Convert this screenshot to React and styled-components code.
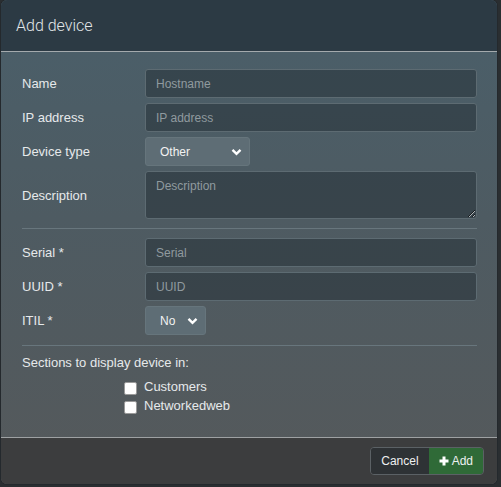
import React from "react";
import styled, { createGlobalStyle } from "styled-components";

const Global = createGlobalStyle`
  html, body { margin: 0; padding: 0; background: #2a2e31; }
  body { font-family: "Liberation Sans", Arial, sans-serif; width: 501px; height: 487px; overflow: hidden; }
  * { box-sizing: border-box; }
`;

const Modal = styled.div`
  margin-left: 1px;
  width: 496px;
  height: 484px;
  border-radius: 6px;
  overflow: hidden;
  display: flex;
  flex-direction: column;
  background: linear-gradient(180deg, #4a5f6a 0%, #4e5b62 45%, #55595b 100%);
  box-shadow: 0 0 0 1px #24292d;
`;

const Header = styled.div`
  height: 52px;
  flex: none;
  background: #2c3a44;
  border-bottom: 1px solid #a4aaad;
  display: flex;
  align-items: center;
  padding: 0 15px;
`;

const Title = styled.h4`
  margin: 0;
  font-family: Roboto, "Liberation Sans", sans-serif;
  font-size: 16px;
  font-weight: 300;
  color: #e2e6e8;
`;

const Body = styled.div`
  flex: 1;
  padding: 17px 20px 0 21px;
  display: flex;
  flex-direction: column;
`;

const Grid = styled.div`
  display: grid;
  grid-template-columns: 123px 1fr;
  row-gap: 5px;
  align-items: center;
`;

const Label = styled.label`
  font-size: 13px;
  color: #e6e9eb;
`;

const Input = styled.input`
  height: 29px;
  width: 100%;
  background: rgba(38, 50, 57, 0.55);
  border: 1px solid #5d6b72;
  border-radius: 3px;
  padding: 0 10px;
  font-family: inherit;
  font-size: 12px;
  color: #eee;
  outline: none;
  &::placeholder { color: #909a9f; }
`;

const TextArea = styled.textarea`
  height: 48px;
  width: 100%;
  background: rgba(38, 50, 57, 0.55);
  border: 1px solid #5d6b72;
  border-radius: 3px;
  padding: 7px 10px;
  font-family: inherit;
  font-size: 12px;
  color: #eee;
  outline: none;
  resize: vertical;
  display: block;
  &::placeholder { color: #909a9f; }
`;

const SelectBox = styled.div`
  height: 29px;
  width: ${p => p.$w}px;
  background: #5e6d75;
  border: 1px solid #66757c;
  border-radius: 3px;
  display: flex;
  align-items: center;
  justify-content: space-between;
  padding: 0 7px 0 ${p => p.$pl}px;
  font-size: 12px;
  color: #f2f2f2;
`;

const Rule = styled.hr`
  border: 0;
  border-top: 1px solid #68767d;
  margin: ${p => p.$m};
`;

const SectionTitle = styled.div`
  font-size: 13px;
  color: #e6e9eb;
  margin-bottom: 9px;
`;

const CheckList = styled.div`
  display: flex;
  flex-direction: column;
  gap: 4px;
  padding-left: 102px;
`;

const CheckRow = styled.label`
  display: flex;
  align-items: center;
  gap: 7px;
  font-size: 13px;
  color: #e6e9eb;
  height: 15px;
`;

const Box = styled.span`
  width: 13px;
  height: 13px;
  background: #fff;
  border: 1px solid #9a9a9a;
  border-radius: 2px;
  margin-top: 3px;
`;

const Footer = styled.div`
  height: 47px;
  flex: none;
  background: #3c3d3e;
  border-top: 1px solid #9ea1a3;
  display: flex;
  justify-content: flex-end;
  align-items: center;
  padding: 0 13px 0 0;
`;

const BtnGroup = styled.div`
  display: flex;
  border: 1px solid #5b6165;
  border-radius: 4px;
  overflow: hidden;
`;

const Btn = styled.button`
  height: 26px;
  border: 0;
  margin: 0;
  padding: 0 ${p => p.$px}px;
  font-family: inherit;
  font-size: 12px;
  color: #eef0f0;
  background: ${p => p.$bg};
  display: flex;
  align-items: center;
  gap: 3px;
`;

const Chevron = () => (
  <svg width="11" height="8" viewBox="0 0 11 8">
    <path d="M1.5 1.8 L5.5 5.8 L9.5 1.8" fill="none" stroke="#fff" strokeWidth="2.4" />
  </svg>
);

const Plus = () => (
  <svg width="10" height="10" viewBox="0 0 10 10">
    <path d="M5 0.5 V9.5 M0.5 5 H9.5" stroke="#fff" strokeWidth="3" />
  </svg>
);

export default function App() {
  return (
    <>
      <Global />
      <Modal>
        <Header>
          <Title>Add device</Title>
        </Header>
        <Body>
          <Grid>
            <Label>Name</Label>
            <Input placeholder="Hostname" />
            <Label>IP address</Label>
            <Input placeholder="IP address" />
            <Label>Device type</Label>
            <SelectBox $w={105} $pl={14}>
              <span>Other</span>
              <Chevron />
            </SelectBox>
            <Label>Description</Label>
            <TextArea placeholder="Description" />
          </Grid>
          <Rule $m="9px 0 9px" />
          <Grid>
            <Label>Serial *</Label>
            <Input placeholder="Serial" />
            <Label>UUID *</Label>
            <Input placeholder="UUID" />
            <Label>ITIL *</Label>
            <SelectBox $w={61} $pl={14}>
              <span>No</span>
              <Chevron />
            </SelectBox>
          </Grid>
          <Rule $m="10px 0 9px" />
          <SectionTitle>Sections to display device in:</SectionTitle>
          <CheckList>
            <CheckRow><Box />Customers</CheckRow>
            <CheckRow><Box />Networkedweb</CheckRow>
          </CheckList>
        </Body>
        <Footer>
          <BtnGroup>
            <Btn $bg="#2e3235" $px={10}>Cancel</Btn>
            <Btn $bg="#2f6a37" $px={10}><Plus />Add</Btn>
          </BtnGroup>
        </Footer>
      </Modal>
    </>
  );
}
